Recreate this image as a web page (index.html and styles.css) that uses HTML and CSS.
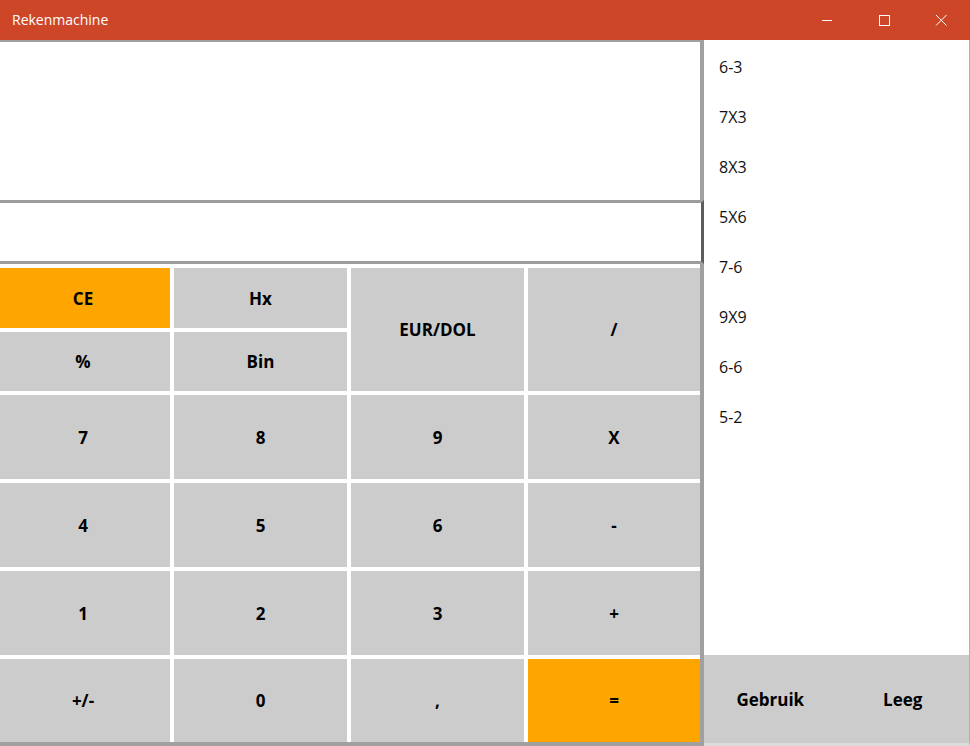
FILE: index.html
```html
<!DOCTYPE html>
<html lang="nl">
<head>
<meta charset="utf-8">
<title>Rekenmachine</title>
<link rel="stylesheet" href="styles.css">
</head>
<body>
<div class="window">
  <header class="titlebar">
    <span class="title">Rekenmachine</span>
    <div class="controls">
      <span class="ctl"><svg width="12" height="12" viewBox="0 0 12 12"><path d="M1 6.5H11" stroke="#fff" stroke-width="1"/></svg></span>
      <span class="ctl"><svg width="12" height="12" viewBox="0 0 12 12"><rect x="1.5" y="1.5" width="10" height="10" fill="none" stroke="#fff" stroke-width="1"/></svg></span>
      <span class="ctl"><svg width="12" height="12" viewBox="0 0 12 12"><path d="M1 1L11.5 11.5M11.5 1L1 11.5" stroke="#fff" stroke-width="1"/></svg></span>
    </div>
  </header>
  <main class="content">
    <section class="calc">
      <div class="display"></div>
      <div class="entry"></div>
      <div class="keys">
        <button class="key orange">CE</button>
        <button class="key">Hx</button>
        <button class="key tall">EUR/DOL</button>
        <button class="key tall">/</button>
        <button class="key">%</button>
        <button class="key">Bin</button>
        <button class="key">7</button>
        <button class="key">8</button>
        <button class="key">9</button>
        <button class="key">X</button>
        <button class="key">4</button>
        <button class="key">5</button>
        <button class="key">6</button>
        <button class="key">-</button>
        <button class="key">1</button>
        <button class="key">2</button>
        <button class="key">3</button>
        <button class="key">+</button>
        <button class="key">+/-</button>
        <button class="key">0</button>
        <button class="key">,</button>
        <button class="key orange">=</button>
      </div>
    </section>
    <aside class="history">
      <ul class="list">
        <li>6-3</li>
        <li>7X3</li>
        <li>8X3</li>
        <li>5X6</li>
        <li>7-6</li>
        <li>9X9</li>
        <li>6-6</li>
        <li>5-2</li>
      </ul>
      <div class="hist-actions">
        <button class="hist-btn">Gebruik</button>
        <button class="hist-btn">Leeg</button>
      </div>
    </aside>
  </main>
</div>
</body>
</html>
```
FILE: styles.css
```css
* { box-sizing: border-box; }
html, body { margin: 0; padding: 0; }
body {
  width: 970px;
  height: 746px;
  overflow: hidden;
  background: #fff;
  font-family: "Open Sans", "Noto Sans", sans-serif;
}
.window {
  display: flex;
  flex-direction: column;
  width: 970px;
  height: 746px;
}
.titlebar {
  height: 40px;
  background: #cd4628;
  display: flex;
  align-items: center;
  justify-content: space-between;
  color: #fff;
}
.title {
  font-size: 14px;
  padding-left: 12px;
  line-height: 40px;
}
.controls {
  display: flex;
  height: 40px;
  padding-right: 1px;
}
.ctl {
  width: 57px;
  height: 40px;
  display: flex;
  align-items: center;
  justify-content: center;
}
.ctl svg { display: block; }
.content {
  flex: 1;
  display: flex;
}
.calc {
  width: 704px;
  border-top: 2px solid #a0a0a0;
  border-right: 4px solid #a0a0a0;
  border-bottom: 4px solid #a0a0a0;
  display: flex;
  flex-direction: column;
  overflow: visible;
}
.display {
  height: 158px;
  background: #fff;
}
.entry {
  height: 64px;
  border-top: 3px solid #9c9c9c;
  border-bottom: 3px solid #9c9c9c;
  border-right: 3px solid #5c5c5c;
  margin-right: -4px;
  background: #fff;
  margin-bottom: 4px;
}
.keys {
  display: grid;
  grid-template-columns: 174px 173px 173px 172px;
  grid-template-rows: 60px 59px 84px 84px 84px 83px;
  gap: 4px;
  margin-left: -4px;
}
.key {
  border: none;
  padding: 0;
  margin: 0;
  background: #cccccc;
  font-family: inherit;
  font-weight: 700;
  font-size: 17px;
  color: #000;
  display: flex;
  align-items: center;
  justify-content: center;
}
.key.orange { background: #ffa500; }
.key.tall { grid-row: span 2; }
.history {
  flex: 1;
  display: flex;
  flex-direction: column;
  border-right: 1px solid #b0b0b0;
  border-bottom: 3px solid #dcdcdc;
}
.list {
  flex: 1;
  list-style: none;
  margin: 0;
  padding: 2px 0 0 15px;
}
.list li {
  height: 50px;
  line-height: 50px;
  font-size: 16px;
  color: #111;
}
.hist-actions {
  height: 88px;
  display: flex;
  background: #cccccc;
}
.hist-btn {
  flex: 1;
  border: none;
  padding: 0;
  background: #cccccc;
  font-family: inherit;
  font-weight: 700;
  font-size: 17px;
  color: #000;
}
```
